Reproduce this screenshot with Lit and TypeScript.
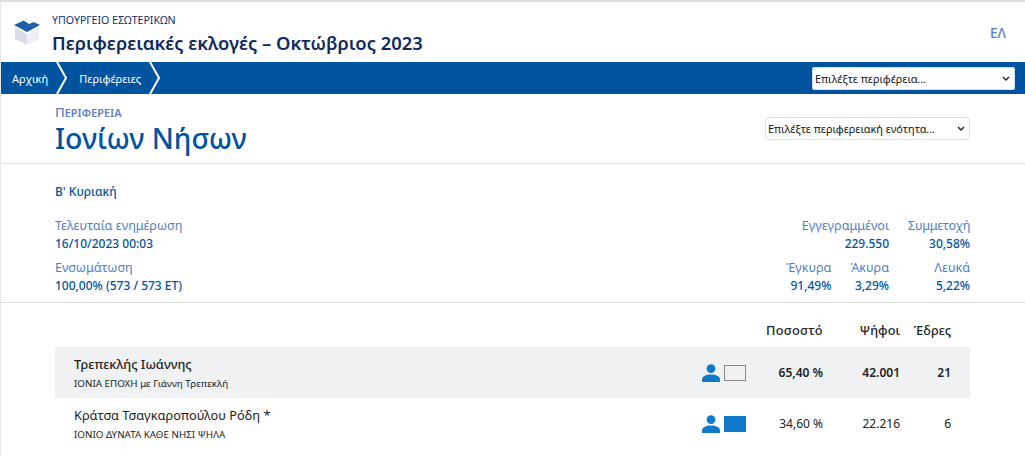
import { LitElement, html, css } from 'lit';
import { customElement } from 'lit/decorators.js';

const person = html`<svg class="person" viewBox="0 0 18 18" width="18" height="18">
  <circle cx="9" cy="4.6" r="4.4" fill="#0f7ac9"></circle>
  <path d="M0 18v-2.5c0-3 4-5 9-5s9 2 9 5v2.5z" fill="#0f7ac9"></path>
</svg>`;

const box = html`<svg class="logo" viewBox="0 0 26 26" width="26" height="26">
  <path d="M1 8l12 7v11L1 20z" fill="#d9dee6"></path>
  <path d="M25 8l-12 7v11l12-6z" fill="#eceff3"></path>
  <path d="M0 6l13-6 13 6-13 7z" fill="#1f5fa8"></path>
  <path d="M9 1l5-1 6 3-5 2z" fill="#fff"></path>
</svg>`;

const chevron = html`<svg class="chevron" viewBox="0 0 12 32" width="12" height="32">
  <path d="M1 0l9 16-9 16" fill="none" stroke="#fff" stroke-width="2"></path>
</svg>`;

@customElement('app-root')
export class AppRoot extends LitElement {
  static styles = css`
    :host {
      display: block;
      height: 456px;
      overflow: hidden;
      font-family: 'Noto Sans', 'Open Sans', sans-serif;
      font-size: 12px;
      color: #222;
      background: #fff;
      border-top: 2px solid #dcdcdc;
      border-left: 1px solid #e8e8e8;
      box-sizing: border-box;
    }
    .top {
      height: 60px;
      display: flex;
      padding: 11px 19px 0 13px;
      box-sizing: border-box;
    }
    .logo {
      margin: 6px 12px 0 0;
      flex: none;
    }
    .ministry {
      font-size: 10.6px;
      line-height: 15px;
      color: #0b2f6b;
    }
    .site {
      font-size: 18.4px;
      font-weight: 600;
      line-height: 24px;
      margin-top: 3px;
      color: #0f2a5f;
    }
    .lang {
      margin-left: auto;
      margin-top: 11px;
      font-size: 13.5px;
      font-weight: 500;
      color: #4f7fbf;
    }
    .nav {
      height: 32px;
      background: #00549f;
      display: flex;
      align-items: center;
      color: #fff;
      font-size: 11px;
      padding-left: 11px;
      padding-right: 10px;
    }
    .chevron {
      margin: 0 11px 0 8px;
      flex: none;
    }
    select {
      appearance: none;
      font-family: inherit;
      font-size: 10.85px;
      color: #111;
      border: 1px solid #ddd;
      border-radius: 4px;
      height: 23px;
      padding: 0 2px;
      background: #fff url("data:image/svg+xml,%3Csvg xmlns='http://www.w3.org/2000/svg' width='8' height='5'%3E%3Cpath d='M1 1l3 3 3-3' fill='none' stroke='%23222' stroke-width='1.4'/%3E%3C/svg%3E") no-repeat right 4px center;
    }
    .nav select {
      margin-left: auto;
      width: 203px;
      border-color: #cfe0f2;
      border-radius: 2px;
    }
    .region {
      height: 70px;
      display: flex;
      justify-content: space-between;
      padding: 11px 55px 0 54px;
      border-bottom: 1px solid #dedede;
      box-sizing: border-box;
    }
    .label {
      font-size: 13.3px;
      line-height: 15px;
      font-weight: 500;
      font-variant: small-caps;
      color: #5b80c4;
    }
    .name {
      font-size: 28.5px;
      line-height: 36px;
      font-weight: 500;
      color: #00549f;
    }
    .region select {
      width: 205px;
      margin-top: 12px;
    }
    .stats {
      height: 139px;
      box-sizing: border-box;
      padding: 19px 55px 0 54px;
      border-bottom: 1px solid #dedede;
    }
    .round {
      font-size: 12px;
      line-height: 18px;
      font-weight: 500;
      color: #00549f;
    }
    .grid {
      display: flex;
      justify-content: space-between;
      margin-top: 16px;
    }
    .stat-title {
      font-size: 12.6px;
      line-height: 18px;
      color: #4f7fbf;
    }
    .tight {
      letter-spacing: -0.3px;
    }
    .stat-value {
      font-size: 12px;
      line-height: 18px;
      font-weight: 500;
      color: #00549f;
    }
    .group {
      margin-bottom: 6px;
    }
    .right {
      text-align: right;
    }
    .pair {
      display: flex;
      justify-content: flex-end;
    }
    .pair > div {
      margin-left: 19px;
    }
    .results {
      padding: 18px 55px 0 54px;
    }
    .row {
      display: grid;
      grid-template-columns: 1fr 18px 26px 77px 77px 51px 19px;
      align-items: center;
      height: 51px;
      font-size: 12px;
    }
    .head {
      height: 26px;
      font-weight: 500;
      font-size: 12.8px;
      align-items: start;
    }
    .head > div,
    .num {
      text-align: right;
    }
    .head .wide-head {
      letter-spacing: 0.3px;
    }
    .win {
      background: #f0f1f3;
      font-weight: 600;
    }
    .who {
      padding-left: 19px;
    }
    .candidate {
      font-size: 12.8px;
      line-height: 19px;
      font-weight: 500;
    }
    .party {
      font-size: 9.8px;
      line-height: 14px;
      font-weight: 400;
      margin-top: 3px;
    }
    .row:not(.win) .candidate {
      font-weight: 400;
    }
    .swatch {
      width: 22px;
      height: 16px;
      box-sizing: border-box;
      margin-left: 4px;
    }
    .person {
      display: block;
    }
    .wide {
      width: 62px;
    }
  `;

  renderRow(name: string, party: string, pct: string, votes: string, seats: string, swatch: string, win: boolean) {
    return html`<div class="row ${win ? 'win' : ''}">
      <div class="who">
        <div class="candidate">${name}</div>
        <div class="party">${party}</div>
      </div>
      ${person}
      <div class="swatch" style=${swatch}></div>
      <div class="num">${pct}</div>
      <div class="num">${votes}</div>
      <div class="num">${seats}</div>
      <div></div>
    </div>`;
  }

  render() {
    return html`
      <div class="top">
        ${box}
        <div>
          <div class="ministry">ΥΠΟΥΡΓΕΙΟ ΕΣΩΤΕΡΙΚΩΝ</div>
          <div class="site">Περιφερειακές εκλογές – Οκτώβριος 2023</div>
        </div>
        <div class="lang">ΕΛ</div>
      </div>
      <div class="nav">
        <span>Αρχική</span>${chevron}
        <span>Περιφέρειες</span>${chevron}
        <select><option>Επιλέξτε περιφέρεια...</option></select>
      </div>
      <div class="region">
        <div>
          <div class="label">Περιφέρεια</div>
          <div class="name">Ιονίων Νήσων</div>
        </div>
        <select><option>Επιλέξτε περιφερειακή ενότητα...</option></select>
      </div>
      <div class="stats">
        <div class="round">Β' Κυριακή</div>
        <div class="grid">
          <div>
            <div class="group">
              <div class="stat-title">Τελευταία ενημέρωση</div>
              <div class="stat-value">16/10/2023 00:03</div>
            </div>
            <div class="group">
              <div class="stat-title">Ενσωμάτωση</div>
              <div class="stat-value">100,00% (573 / 573 ΕΤ)</div>
            </div>
          </div>
          <div class="right">
            <div class="group pair">
              <div><div class="stat-title">Εγγεγραμμένοι</div><div class="stat-value">229.550</div></div>
              <div><div class="stat-title tight">Συμμετοχή</div><div class="stat-value">30,58%</div></div>
            </div>
            <div class="group pair">
              <div><div class="stat-title">Έγκυρα</div><div class="stat-value">91,49%</div></div>
              <div><div class="stat-title">Άκυρα</div><div class="stat-value">3,29%</div></div>
              <div class="wide"><div class="stat-title">Λευκά</div><div class="stat-value">5,22%</div></div>
            </div>
          </div>
        </div>
      </div>
      <div class="results">
        <div class="row head">
          <div></div><div></div><div></div>
          <div class="wide-head">Ποσοστό</div><div>Ψήφοι</div><div>Έδρες</div><div></div>
        </div>
        ${this.renderRow('Τρεπεκλής Ιωάννης', 'ΙΟΝΙΑ ΕΠΟΧΗ με Γιάννη Τρεπεκλή', '65,40 %', '42.001', '21', 'border:1px solid #888', true)}
        ${this.renderRow('Κράτσα Τσαγκαροπούλου Ρόδη *', 'ΙΟΝΙΟ ΔΥΝΑΤΑ ΚΑΘΕ ΝΗΣΙ ΨΗΛΑ', '34,60 %', '22.216', '6', 'background:#0f7ac9', false)}
      </div>
    `;
  }
}
